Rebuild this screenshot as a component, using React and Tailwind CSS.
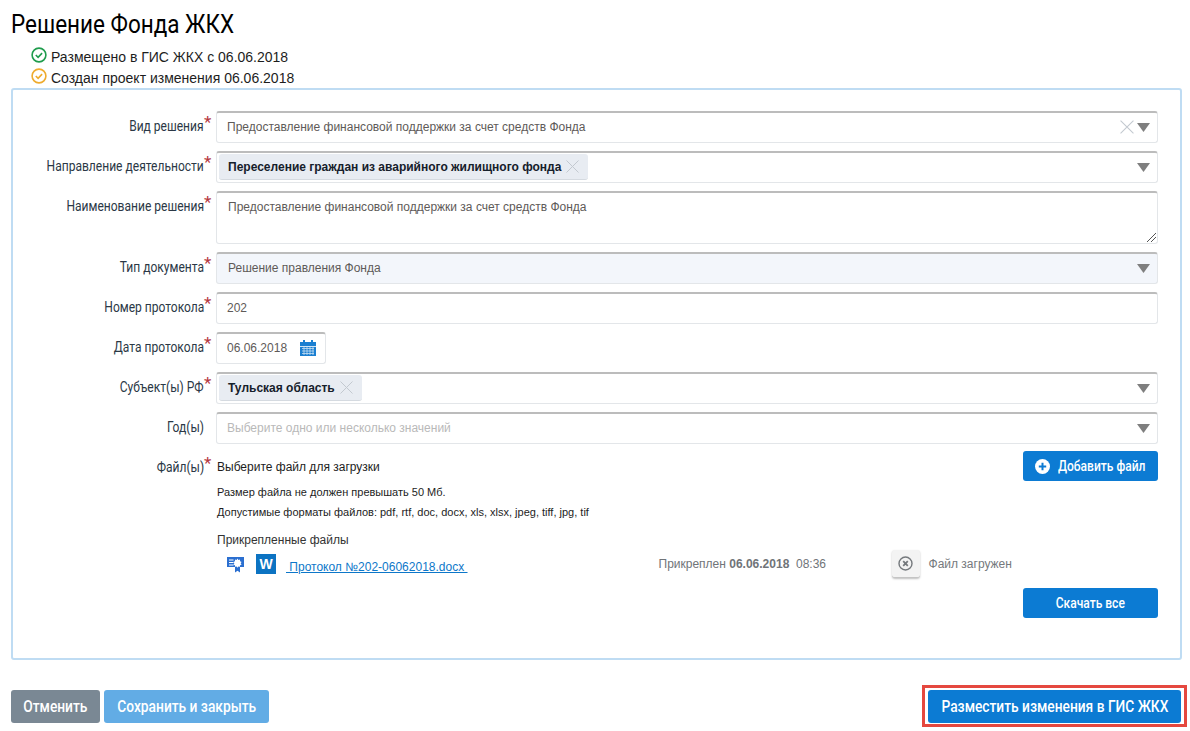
const cond = "font-['Roboto',sans-serif] inline-block whitespace-nowrap scale-x-[0.86]";

const Arrow = () => (
  <svg width="13" height="9" viewBox="0 0 13 9" className="shrink-0">
    <path d="M0 0h13L6.5 9z" fill="#7f7f7f" />
  </svg>
);

const Cross = ({ size = 13 }) => (
  <svg width={size} height={size} viewBox="0 0 13 13" className="shrink-0">
    <path d="M.5.5l12 12M12.5.5l-12 12" stroke="#c3c9d0" strokeWidth="1" fill="none" />
  </svg>
);

const StatusIcon = ({ color }) => (
  <svg width="16" height="16" viewBox="0 0 16 16" className="shrink-0 mb-[5px]">
    <circle cx="8" cy="8" r="6.9" fill="none" stroke={color} strokeWidth="1.6" />
    <path d="M4.8 8l2.3 2.3 4-4.2" fill="none" stroke={color} strokeWidth="1.6" />
  </svg>
);

const fieldBox =
  "border border-[#e3e6e9] border-t-2 border-t-[#bcbcbc] rounded-[3px] flex items-center pb-[1px]";

const Tag = ({ children }) => (
  <div className="h-[26px] bg-[#e8ecf2] rounded-[3px] border-b border-[#d5dae0] flex items-center gap-[5px] px-[9px]">
    <span className="text-[12px] font-bold text-[#16202b] whitespace-nowrap">{children}</span>
    <Cross />
  </div>
);

const Row = ({ label, required = true, children }) => (
  <div className="flex">
    <div className="w-[191px] shrink-0 flex justify-end text-[14px] leading-[20px] text-[#2b3846] pt-[5px]">
      <span className={`${cond} origin-right`}>{label}</span>
    </div>
    <div className="w-[12px] shrink-0 relative">
      {required && <span className="absolute left-0 top-[1px] text-[17px] leading-[20px] text-[#b5383f] font-['Roboto',sans-serif]">*</span>}
    </div>
    <div className="flex-1 min-w-0">{children}</div>
  </div>
);

const Btn = ({ children, className }) => (
  <button className={`rounded-[3px] text-white text-[16px] font-medium flex items-center justify-center ${className}`}>
    {children}
  </button>
);

export default function App() {
  return (
    <div className="w-[1190px] h-[731px] bg-white font-['Liberation_Sans',Arial,sans-serif] overflow-hidden">
      <div className="pl-[11px] pt-[8px] h-[36px]">
        <h1 className="text-[26px] leading-[32px] text-black font-['Roboto',sans-serif] inline-block origin-left scale-x-[0.865] whitespace-nowrap">
          Решение Фонда ЖКХ
        </h1>
      </div>
      <div className="pl-[31px] pt-[11px] text-[14px] leading-[21px] text-[#1d1d1d]">
        <div className="flex items-center gap-[4px]">
          <StatusIcon color="#1f9c4d" />
          <span>Размещено в ГИС ЖКХ с 06.06.2018</span>
        </div>
        <div className="flex items-center gap-[4px]">
          <StatusIcon color="#eeab2e" />
          <span>Создан проект изменения 06.06.2018</span>
        </div>
      </div>

      {/* main form panel */}
      <div className="mx-[11px] mt-[-1px] w-[1171px] h-[572px] border-2 border-[#bfdcf3] rounded-[3px] pt-[21px] pr-[22px] flex flex-col gap-[8px]">
        <Row label="Вид решения">
          <div className={`${fieldBox} h-[32px] pl-[10px] pr-[7px] text-[12px] text-[#5e5a58]`}>
            <span className="flex-1">Предоставление финансовой поддержки за счет средств Фонда</span>
            <Cross size={14} />
            <span className="w-[3px]" />
            <Arrow />
          </div>
        </Row>
        <Row label="Направление деятельности">
          <div className={`${fieldBox} h-[32px] pl-[2px] pr-[7px] justify-between`}>
            <Tag>Переселение граждан из аварийного жилищного фонда</Tag>
            <Arrow />
          </div>
        </Row>
        <Row label="Наименование решения">
          <div className={`${fieldBox} h-[53px] items-start pl-[11px] pt-[5px] text-[12px] text-[#5e5a58] relative`}>
            Предоставление финансовой поддержки за счет средств Фонда
            <svg width="9" height="9" viewBox="0 0 9 9" className="absolute right-[1px] bottom-[1px]">
              <path d="M0 9l9-9M4 9l5-5" stroke="#555" strokeWidth="1" fill="none" />
            </svg>
          </div>
        </Row>
        <Row label="Тип документа">
          <div className={`${fieldBox} h-[32px] pl-[11px] pr-[7px] justify-between bg-[#f3f6fb] text-[12px] text-[#5e5a58]`}>
            <span>Решение правления Фонда</span>
            <Arrow />
          </div>
        </Row>
        <Row label="Номер протокола">
          <div className={`${fieldBox} h-[32px] pl-[10px] text-[12px] text-[#5e5a58]`}>202</div>
        </Row>
        <Row label="Дата протокола">
          <div className={`${fieldBox} h-[32px] w-[110px] pl-[10px] pr-[9px] justify-between text-[12px] text-[#5e5a58]`}>
            <span>06.06.2018</span>
            <svg width="16" height="16" viewBox="0 0 16 16">
              <path d="M0 2h3V0h2v2h6V0h2v2h3v4H0z" fill="#1b7fd1" />
              <path d="M0 6.8h16V16H0z" fill="#1b7fd1" />
              <path d="M2 8.5h12M2 11h12M2 13.5h12M4 7v8M7 7v8M10 7v8M13 7v8" stroke="#fff" strokeWidth="0.8" opacity="0.75" />
            </svg>
          </div>
        </Row>
        <Row label="Субъект(ы) РФ">
          <div className={`${fieldBox} h-[32px] pl-[2px] pr-[7px] justify-between`}>
            <Tag>Тульская область</Tag>
            <Arrow />
          </div>
        </Row>
        <Row label="Год(ы)" required={false}>
          <div className={`${fieldBox} h-[32px] pl-[10px] pr-[7px] justify-between text-[12px] text-[#b9b9b9]`}>
            <span>Выберите одно или несколько значений</span>
            <Arrow />
          </div>
        </Row>
        <Row label="Файл(ы)">
          <div className="text-[#1d1d1d] pl-[1px]">
            <div className="flex justify-between">
              <span className="text-[12px] leading-[14px] pt-[8px]">Выберите файл для загрузки</span>
              <Btn className="w-[135px] h-[30px] mt-[-1px] bg-[#0c7bd3] gap-[8px]">
                <svg width="15" height="15" viewBox="0 0 15 15">
                  <circle cx="7.5" cy="7.5" r="7.5" fill="#fff" />
                  <path d="M7.5 3.8v7.4M3.8 7.5h7.4" stroke="#0c7bd3" strokeWidth="2" />
                </svg>
                <span className="text-[14px] inline-block font-['Roboto',sans-serif] scale-x-[0.86] origin-left whitespace-nowrap w-[88px]">Добавить файл</span>
              </Btn>
            </div>
            <div className="text-[11px] leading-[14px] mt-[4px]">Размер файла не должен превышать 50 Мб.</div>
            <div className="text-[11px] leading-[14px] mt-[6px]">Допустимые форматы файлов: pdf, rtf, doc, docx, xls, xlsx, jpeg, tiff, jpg, tif</div>
            <div className="text-[12px] leading-[14px] mt-[14px] text-[#333]">Прикрепленные файлы</div>
            <div className="flex items-center h-[30px] mt-[2px] text-[12px]">
              <svg width="17" height="17" viewBox="0 0 17 17" className="ml-[10px]">
                <path d="M0 1h17v10h-4v5.5l-2.5-1.8L8 16.5V11H0z" fill="#2b6fd0" />
                <path d="M2 4h4.5M2 6.5h4.5M2 9h4.5" stroke="#fff" strokeWidth="1.2" />
                <path d="M10.5 2.5l.9 1.4 1.6-.4.1 1.7 1.5.7-1 1.3 1 1.3-1.5.7-.1 1.6-1.6-.4-.9 1.4-.9-1.4-1.6.4-.1-1.6-1.5-.7 1-1.3-1-1.3 1.5-.7.1-1.7 1.6.4z" fill="#fff" />
              </svg>
              <div className="w-[20px] h-[20px] bg-[#0c73c2] ml-[12px] text-white font-bold text-[14px] leading-[20px] text-center">W</div>
              <a className="ml-[10px] mt-[6px] text-[#0d77c9] underline whitespace-pre">{" Протокол №202-06062018.docx "}</a>
              <div className="ml-[191px] w-[233px] text-[#707478] text-[12px] whitespace-pre">
                Прикреплен <b>06.06.2018</b>{"  "}08:36
              </div>
              <div className="w-[28px] h-[28px] rounded-[3px] bg-[#f3f3f3] border-b border-[#c4c4c4] shadow-[0_1px_2px_rgba(0,0,0,0.25)] flex items-center justify-center">
                <svg width="15" height="15" viewBox="0 0 15 15">
                  <circle cx="7.5" cy="7.5" r="6.5" fill="none" stroke="#75797d" strokeWidth="1.4" />
                  <path d="M5.2 5.2l4.6 4.6M9.8 5.2l-4.6 4.6" stroke="#75797d" strokeWidth="1.8" />
                </svg>
              </div>
              <span className="ml-[9px] text-[#75797d] text-[12px]">Файл загружен</span>
            </div>
            <div className="flex justify-end mt-[9px]">
              <Btn className="w-[135px] h-[30px] bg-[#0c7bd3]">
                <span className={`text-[14px] ${cond}`}>Скачать все</span>
              </Btn>
            </div>
          </div>
        </Row>
      </div>

      <div className="flex justify-between items-center pl-[11px] pr-[3px] mt-[25px]">
        <div className="flex gap-[4px]">
          <Btn className="w-[89px] h-[33px] bg-[#7a8894] pt-[1px]">
            <span className={cond}>Отменить</span>
          </Btn>
          <Btn className="w-[165px] h-[33px] bg-[#62ace5] pt-[1px]">
            <span className={cond}>Сохранить и закрыть</span>
          </Btn>
        </div>
        <div className="border-[3px] border-[#e5483f] px-[3px] pt-[2px] pb-[1px]">
          <Btn className="w-[253px] h-[33px] bg-[#0c7bd3] pt-[1px]">
            <span className={cond}>Разместить изменения в ГИС ЖКХ</span>
          </Btn>
        </div>
      </div>
    </div>
  );
}
